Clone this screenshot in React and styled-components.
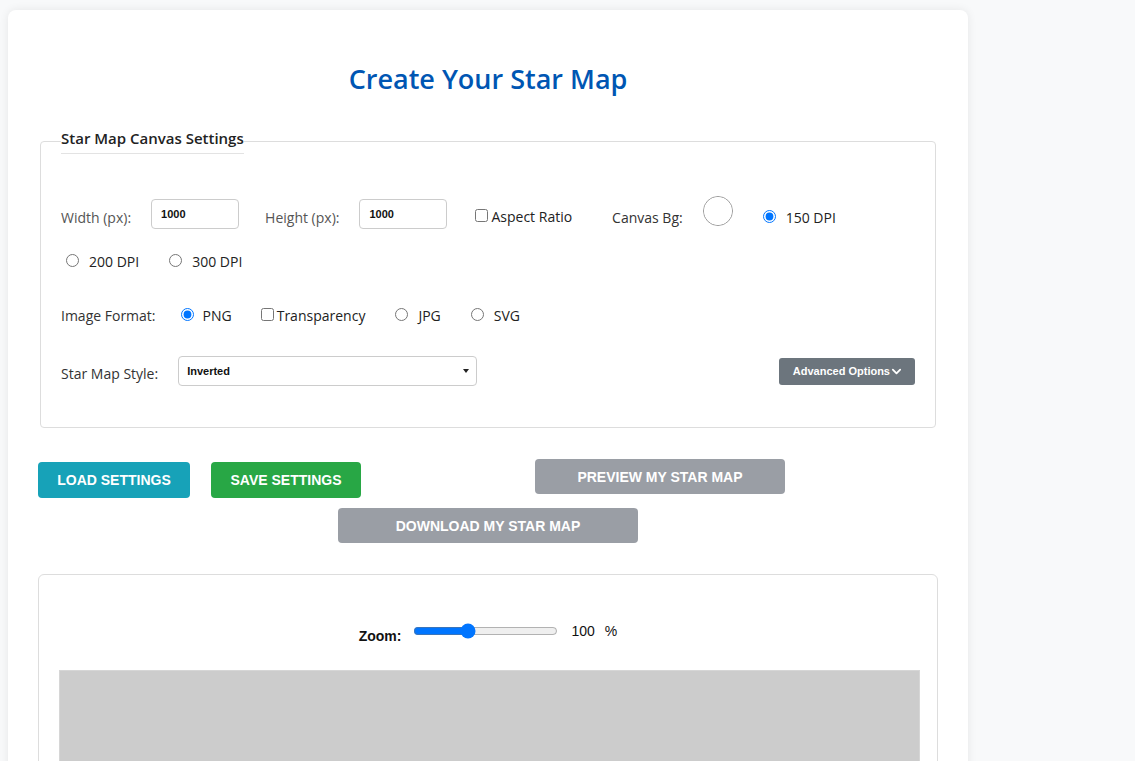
import React from 'react';
import styled, { createGlobalStyle } from 'styled-components';

const GlobalStyle = createGlobalStyle`
  html, body {
    margin: 0;
    padding: 0;
    background: #f8f9fa;
    font-family: "Open Sans", "Liberation Sans", Arial, sans-serif;
    color: #333;
  }
  * { box-sizing: border-box; }
`;

const Page = styled.div`
  padding: 10px 8px 0;
`;

const Card = styled.div`
  width: 960px;
  background: #fff;
  border-radius: 8px;
  box-shadow: 0 0 10px rgba(0, 0, 0, 0.08);
  padding: 30px 30px 40px;
`;

const Title = styled.h1`
  margin: 23px 0 33px;
  text-align: center;
  font-size: 27px;
  font-weight: 600;
  line-height: 1.2;
  color: #0056b3;
`;

const Fieldset = styled.fieldset`
  margin: 0 2px;
  padding: 42px 20px 41px;
  border: 1px solid #ddd;
  border-radius: 4px;
`;

const Legend = styled.legend`
  padding: 0 0 5px;
  font-size: 15px;
  font-weight: 600;
  line-height: 20px;
  color: #222;
  border-bottom: 1px solid #e3e3e3;
`;

const Row = styled.div`
  display: flex;
  flex-wrap: wrap;
  align-items: center;
  row-gap: 20px;
  margin-bottom: ${({ $mb }) => $mb || 0}px;
  justify-content: ${({ $between }) => ($between ? 'space-between' : 'flex-start')};
`;

const Group = styled.div`
  display: flex;
  align-items: center;
`;

const Label = styled.span`
  font-size: 14px;
  line-height: 20px;
  padding-top: ${({ $pt }) => $pt || 0}px;
  color: ${({ $muted }) => ($muted ? '#555' : '#333')};
  margin-right: ${({ $mr }) => ($mr === undefined ? 20 : $mr)}px;
`;

const NumInput = styled.input`
  width: 88px;
  height: 30px;
  border: 1px solid #ccc;
  border-radius: 4px;
  padding: 0 9px;
  font-family: "Liberation Sans", Arial, sans-serif;
  font-size: 11px;
  font-weight: 700;
  color: #111;
  margin-right: ${({ $mr }) => $mr || 26}px;
  outline: none;
`;

const Option = styled.label`
  display: inline-block;
  font-size: 14px;
  line-height: 20px;
  color: #222;
  padding-top: ${({ $pt }) => $pt || 0}px;
  margin-right: ${({ $mr }) => ($mr === undefined ? 25 : $mr)}px;
  white-space: nowrap;
`;

const OptionText = styled.span`
  margin-left: ${({ $ml }) => $ml || 0}px;
`;

const ColorPick = styled.input`
  -webkit-appearance: none;
  appearance: none;
  width: 30px;
  height: 30px;
  padding: 0;
  border: 1px solid #999;
  border-radius: 50%;
  background: #fff;
  margin: 0 25px 5px 0;
  cursor: pointer;
  &::-webkit-color-swatch-wrapper { padding: 0; }
  &::-webkit-color-swatch { border: none; border-radius: 50%; }
`;

const SelectWrap = styled.div`
  position: relative;
  &::after {
    content: '';
    position: absolute;
    right: 8px;
    top: 13px;
    border-left: 3.5px solid transparent;
    border-right: 3.5px solid transparent;
    border-top: 4px solid #222;
    pointer-events: none;
  }
`;

const Select = styled.select`
  -webkit-appearance: none;
  appearance: none;
  display: block;
  width: 299px;
  height: 30px;
  border: 1px solid #ccc;
  border-radius: 4px;
  padding: 0 8px;
  font-family: "Liberation Sans", Arial, sans-serif;
  font-size: 11px;
  font-weight: 700;
  color: #111;
  background: #fff;
`;

const SmallButton = styled.button`
  display: flex;
  align-items: center;
  gap: 1px;
  height: 27px;
  padding: 0 13px 0 14px;
  border: none;
  border-radius: 3px;
  background: #6c757d;
  color: #fff;
  font-family: "Liberation Sans", Arial, sans-serif;
  font-size: 11px;
  font-weight: 700;
`;

const Actions = styled.div`
  margin-top: 31px;
`;

const ActionRow = styled.div`
  display: flex;
  align-items: flex-start;
  justify-content: ${({ $center }) => ($center ? 'center' : 'flex-start')};
  margin-top: ${({ $mt }) => $mt || 0}px;
`;

const Button = styled.button`
  height: ${({ $h }) => $h || 36}px;
  width: ${({ $w }) => ($w ? `${$w}px` : 'auto')};
  padding: 0;
  margin-left: ${({ $ml }) => $ml || 0}px;
  margin-top: ${({ $mt }) => $mt || 0}px;
  border: none;
  border-radius: 4px;
  background: ${({ $bg }) => $bg};
  color: #fff;
  font-family: "Liberation Sans", Arial, sans-serif;
  font-size: 14px;
  font-weight: 700;
  text-transform: uppercase;
  white-space: nowrap;
`;

const Preview = styled.div`
  margin-top: 31px;
  border: 1px solid #ddd;
  border-radius: 6px;
  padding: 46px 20px 0;
  height: 200px;
  overflow: hidden;
`;

const ZoomBar = styled.div`
  display: flex;
  justify-content: center;
  align-items: center;
  height: 20px;
  margin-bottom: 29px;
  font-family: "Liberation Sans", Arial, sans-serif;
  font-size: 14px;
  color: #111;
`;

const ZoomLabel = styled.span`
  font-weight: 700;
  padding-top: 9px;
  margin-right: 12px;
`;

const Range = styled.input`
  width: 145px;
  margin: 0 13px 0 0;
`;

const Percent = styled.span`
  margin-left: 10px;
`;

const CanvasArea = styled.div`
  width: calc(100% + 3px);
  height: 300px;
  background: #ccc;
  border: 1px solid #d6d6d6;
`;

const Chevron = () => (
  <svg width="11" height="11" viewBox="0 0 12 12" fill="none">
    <polyline points="2,4 6,8 10,4" stroke="#fff" strokeWidth="2" strokeLinecap="round" strokeLinejoin="round" />
  </svg>
);

export default function App() {
  return (
    <>
      <GlobalStyle />
      <Page>
        <Card>
          <Title>Create Your Star Map</Title>

          <Fieldset>
            <Legend>Star Map Canvas Settings</Legend>

            <Row $mb={33}>
              <Group>
                <Label $muted $pt={8}>Width (px):</Label>
                <NumInput type="text" defaultValue="1000" />
              </Group>
              <Group>
                <Label $muted $pt={8}>Height (px):</Label>
                <NumInput type="text" defaultValue="1000" $mr={24} />
              </Group>
              <Option $mr={40} $pt={6}>
                <input type="checkbox" />
                <OptionText>Aspect Ratio</OptionText>
              </Option>
              <Group>
                <Label $pt={8}>Canvas Bg:</Label>
                <ColorPick type="color" defaultValue="#ffffff" />
              </Group>
              <Option $pt={8}>
                <input type="radio" name="dpi" defaultChecked />
                <OptionText $ml={7}>150 DPI</OptionText>
              </Option>
              <Option>
                <input type="radio" name="dpi" />
                <OptionText $ml={7}>200 DPI</OptionText>
              </Option>
              <Option>
                <input type="radio" name="dpi" />
                <OptionText $ml={7}>300 DPI</OptionText>
              </Option>
            </Row>

            <Row $mb={30}>
              <Label>Image Format:</Label>
              <Option>
                <input type="radio" name="fmt" defaultChecked />
                <OptionText $ml={6}>PNG</OptionText>
              </Option>
              <Option>
                <input type="checkbox" />
                <OptionText>Transparency</OptionText>
              </Option>
              <Option>
                <input type="radio" name="fmt" />
                <OptionText $ml={7}>JPG</OptionText>
              </Option>
              <Option>
                <input type="radio" name="fmt" />
                <OptionText $ml={7}>SVG</OptionText>
              </Option>
            </Row>

            <Row $between>
              <Group>
                <Label $pt={6}>Star Map Style:</Label>
                <SelectWrap>
                  <Select defaultValue="inverted">
                    <option value="inverted">Inverted</option>
                    <option value="classic">Classic</option>
                  </Select>
                </SelectWrap>
              </Group>
              <SmallButton>
                Advanced Options<Chevron />
              </SmallButton>
            </Row>
          </Fieldset>

          <Actions>
            <ActionRow>
              <Button $bg="#17a2b8" $mt={3} $w={152}>Load Settings</Button>
              <Button $bg="#28a745" $mt={3} $w={150} $ml={21}>Save Settings</Button>
              <Button $bg="#9a9ea5" $h={35} $w={250} $ml={174}>Preview My Star Map</Button>
            </ActionRow>
            <ActionRow $center $mt={10}>
              <Button $bg="#9a9ea5" $h={35} $w={300}>Download My Star Map</Button>
            </ActionRow>
          </Actions>

          <Preview>
            <ZoomBar>
              <ZoomLabel>Zoom:</ZoomLabel>
              <Range type="range" min="10" max="260" defaultValue="100" />
              <span>100</span>
              <Percent>%</Percent>
            </ZoomBar>
            <CanvasArea />
          </Preview>
        </Card>
      </Page>
    </>
  );
}
